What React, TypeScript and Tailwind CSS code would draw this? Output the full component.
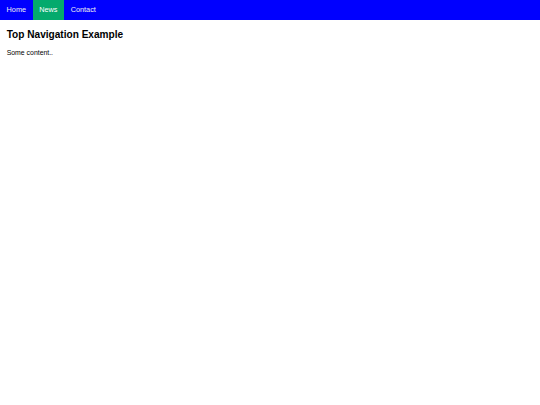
export default function App() {
  const links = [
    { label: "Home", active: false },
    { label: "News", active: true },
    { label: "Contact", active: false },
  ];

  return (
    <div className="min-h-screen bg-white font-['Liberation_Sans',Arial,sans-serif] text-black">
      <nav className="flex bg-[#0000ff]">
        {links.map((l) => (
          <a
            key={l.label}
            href="#"
            className={`block px-[6.6px] py-[6px] text-[7.3px] leading-[1.15] ${
              l.active ? "bg-[#04aa6d] text-white" : "text-[#f2f2f2]"
            }`}
          >
            {l.label}
          </a>
        ))}
      </nav>
      <div className="pl-[6.7px]">
        <h2 className="mt-[9px] mb-[8.4px] text-[10.1px] font-bold leading-[1.15]">
          Top Navigation Example
        </h2>
        <p className="my-[6.8px] text-[6.9px] leading-[1.15]">Some content..</p>
      </div>
    </div>
  );
}
